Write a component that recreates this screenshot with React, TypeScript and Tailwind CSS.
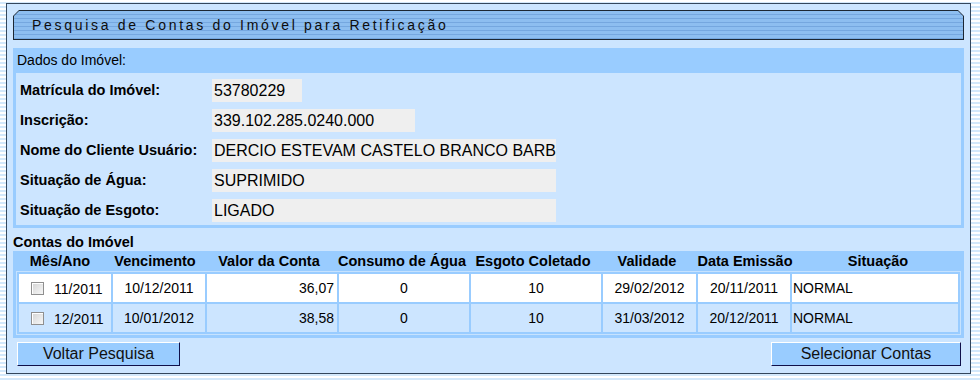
import React from 'react';

const fields = [
    { label: 'Matrícula do Imóvel:', value: '53780229', width: 'w-[90px]' },
    { label: 'Inscrição:', value: '339.102.285.0240.000', width: 'w-[203px]' },
    { label: 'Nome do Cliente Usuário:', value: 'DERCIO ESTEVAM CASTELO BRANCO BARB', width: 'w-[344px]' },
    { label: 'Situação de Água:', value: 'SUPRIMIDO', width: 'w-[344px]' },
    { label: 'Situação de Esgoto:', value: 'LIGADO', width: 'w-[344px]' },
];

const headers = ['Mês/Ano', 'Vencimento', 'Valor da Conta', 'Consumo de Água', 'Esgoto Coletado', 'Validade', 'Data Emissão', 'Situação'];

const contas = [
    { mesAno: '11/2011', vencimento: '10/12/2011', valor: '36,07', consumo: '0', esgoto: '10', validade: '29/02/2012', emissao: '20/11/2011', situacao: 'NORMAL' },
    { mesAno: '12/2011', vencimento: '10/01/2012', valor: '38,58', consumo: '0', esgoto: '10', validade: '31/03/2012', emissao: '20/12/2011', situacao: 'NORMAL' },
];

const Checkbox: React.FC = () => (
    <span className="inline-block w-[13px] h-[13px] border border-[#8f8f8f] bg-[linear-gradient(135deg,#d4d4d4,#f7f7f7)] shadow-[inset_1px_1px_0_#ffffff]" />
);

const Botao: React.FC<{ label: string; className: string }> = ({ label, className }) => (
    <button className={`h-[24px] bg-[#99ccff] border border-t-white border-l-white border-r-[#10104a] border-b-[#10104a] text-[16px] leading-none text-[#111] ${className}`}>
        {label}
    </button>
);

const App: React.FC = () => {
    return (
        <div className="w-[980px] h-[380px] pt-[3px] pl-[6px] bg-[repeating-linear-gradient(180deg,#ffffff_0px,#ffffff_2px,#d3e8fb_2px,#d3e8fb_4px)] font-['Liberation_Sans',Arial,sans-serif] text-black">
            <div className="w-[965px] h-[371px] border border-[#34475c] bg-[#cce5ff] px-[6px] pt-[6px]">
                {/* Title bar */}
                <div className="h-[30px] p-px bg-[#1c2733] [clip-path:polygon(6px_0,calc(100%-6px)_0,100%_6px,100%_100%,0_100%,0_6px)]">
                    <div className="h-full flex items-center pl-[18px] bg-[repeating-linear-gradient(180deg,#8dbef0_0px,#8dbef0_3px,#75a7df_3px,#75a7df_4px)] [clip-path:polygon(5px_0,calc(100%-5px)_0,100%_5px,100%_100%,0_100%,0_5px)]">
                        <span className="text-[14px] tracking-[2.7px] text-[#0d0d0d]">Pesquisa de Contas do Imóvel para Retificação</span>
                    </div>
                </div>

                {/* Dados do imóvel */}
                <div className="mt-[8px] h-[25px] bg-[#99ccff] pl-[4px] flex items-center text-[14px]">Dados do Imóvel:</div>
                <div className="border-[3px] border-t-0 border-[#99ccff] pt-[6px] pb-[3px] flex flex-col gap-[7px]">
                    {fields.map(f => (
                        <div key={f.label} className="flex items-center h-[23px]">
                            <div className="w-[196px] pl-[4px] font-bold text-[14.5px]">{f.label}</div>
                            <div className={`${f.width} h-[23px] bg-[#efefef] px-[2px] text-[16px] leading-[23px] whitespace-nowrap overflow-hidden`}>{f.value}</div>
                        </div>
                    ))}
                </div>

                {/* Contas */}
                <div className="mt-[5px] h-[18px] font-bold text-[14.5px] leading-[18px]">Contas do Imóvel</div>
                <div className="h-[20px] bg-[#99ccff] grid grid-cols-[94px_96px_132px_134px_128px_100px_96px_170px] items-center font-bold text-[14.5px] text-center">
                    {headers.map(h => (
                        <div key={h} className="whitespace-nowrap">{h}</div>
                    ))}
                </div>
                <div className="bg-[#99ccff] px-[3px] pb-[3px]">
                    <div className="border border-[#c6e2fe]">
                        <table className="w-full table-fixed border-separate border-spacing-[2px] text-[14px]">
                            <colgroup>
                                <col className="w-[92px]" />
                                <col className="w-[92px]" />
                                <col className="w-[130px]" />
                                <col className="w-[130px]" />
                                <col className="w-[130px]" />
                                <col className="w-[93px]" />
                                <col className="w-[92px]" />
                                <col />
                            </colgroup>
                            <tbody>
                                {contas.map((c, i) => (
                                    <tr key={c.mesAno} className={i === 0 ? 'bg-white' : 'bg-[#cce5ff]'}>
                                        <td className="h-[28px] pl-[12px]">
                                            <div className="flex items-center gap-[10px]">
                                                <Checkbox />
                                                <span className="pt-[3px]">{c.mesAno}</span>
                                            </div>
                                        </td>
                                        <td className="text-center">{c.vencimento}</td>
                                        <td className="text-right pr-[3px]">{c.valor}</td>
                                        <td className="text-center">{c.consumo}</td>
                                        <td className="text-center">{c.esgoto}</td>
                                        <td className="text-center">{c.validade}</td>
                                        <td className="text-center">{c.emissao}</td>
                                        <td className="pl-px">{c.situacao}</td>
                                    </tr>
                                ))}
                            </tbody>
                        </table>
                    </div>
                </div>

                <div className="mt-[4px] flex justify-between pl-[4px] pr-[3px]">
                    <Botao label="Voltar Pesquisa" className="w-[163px]" />
                    <Botao label="Selecionar Contas" className="w-[190px]" />
                </div>
            </div>
        </div>
    );
};

export default App;
